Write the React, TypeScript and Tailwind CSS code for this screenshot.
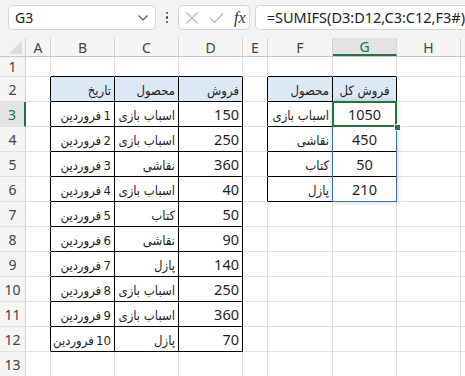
import React from "react";

const COLS = [26, 25, 64, 64, 64, 25, 65, 64, 64];
const LETTERS = ["A", "B", "C", "D", "E", "F", "G", "H"];

type Cell = { t: string; align: "r" | "c"; rtl?: boolean; hdr?: boolean };

const dates = [1, 2, 3, 4, 5, 6, 7, 8, 9, 10].map((n) => `${n}\u2009فروردین`);
const prods = ["اسباب بازی", "اسباب بازی", "نقاشی", "اسباب بازی", "کتاب", "نقاشی", "پازل", "اسباب بازی", "اسباب بازی", "پازل"];
const sales = [150, 250, 360, 40, 50, 90, 140, 250, 360, 70];
const fList = ["اسباب بازی", "نقاشی", "کتاب", "پازل"];
const gList = [1050, 450, 50, 210];

const AR_FONT = '"DejaVu Sans Condensed", "DejaVu Sans", sans-serif';

function inTable(r: number, c: number) {
  if (r >= 2 && r <= 12 && c >= 2 && c <= 4) return true;
  if (r >= 2 && r <= 6 && c >= 6 && c <= 7) return true;
  return false;
}

function getCell(r: number, c: number): Cell | null {
  if (r === 2) {
    if (c === 2) return { t: "تاریخ", align: "r", rtl: true, hdr: true };
    if (c === 3) return { t: "محصول", align: "r", rtl: true, hdr: true };
    if (c === 4) return { t: "فروش", align: "r", rtl: true, hdr: true };
    if (c === 6) return { t: "محصول", align: "r", rtl: true, hdr: true };
    if (c === 7) return { t: "فروش کل", align: "c", rtl: true, hdr: true };
  }
  if (r >= 3 && r <= 12) {
    const i = r - 3;
    if (c === 2) return { t: dates[i], align: "r", rtl: true };
    if (c === 3) return { t: prods[i], align: "r", rtl: true };
    if (c === 4) return { t: String(sales[i]), align: "r" };
  }
  if (r >= 3 && r <= 6) {
    const i = r - 3;
    if (c === 6) return { t: fList[i], align: "r", rtl: true };
    if (c === 7) return { t: String(gList[i]), align: "c" };
  }
  return null;
}

function ChevronDown() {
  return (
    <svg width="12" height="8" viewBox="0 0 12 8" fill="none">
      <path d="M1.5 1.5 L6 6 L10.5 1.5" stroke="#555" strokeWidth="1.2" />
    </svg>
  );
}

function DataCell({ r, c }: { r: number; c: number }) {
  const w = COLS[c];
  const cell = getCell(r, c);
  const rightBlack = inTable(r, c) || inTable(r, c + 1);
  const bottomBlack = inTable(r, c) || inTable(r + 1, c);
  const isG3 = r === 3 && c === 7;
  const h = r === 1 ? 20 : 25;
  return (
    <div
      className={
        "relative shrink-0 flex items-center border-r border-b " +
        (rightBlack ? "border-r-black " : "border-r-[#e1e1e1] ") +
        (bottomBlack ? "border-b-black " : "border-b-[#e1e1e1] ") +
        (cell?.hdr ? "bg-[#dde8f5] " : "bg-white ") +
        (cell?.align === "c" ? "justify-center" : "justify-end pr-[3px]")
      }
      style={{ width: w, height: h }}
    >
      {cell &&
        (cell.rtl ? (
          <span
            dir="rtl"
            className="whitespace-nowrap text-[13px] leading-none text-[#1f1f1f] pt-[2px]"
            style={{ fontFamily: AR_FONT }}
          >
            {cell.t}
          </span>
        ) : (
          <span className="whitespace-nowrap text-[14.5px] leading-none text-[#1f1f1f] pt-[1px]">{cell.t}</span>
        ))}
      {isG3 && (
        <>
          <div className="absolute left-[-1px] top-[-1px] w-[65px] h-[101px] border border-[#3a6cc8] shadow-[0_0_6px_rgba(0,0,0,0.18)] z-10 pointer-events-none" />
          <div className="absolute left-[-1px] top-[-1px] w-[65px] h-[26px] border-2 border-[#217346] z-20 pointer-events-none" />
          <div className="absolute right-[-5px] bottom-[-5px] w-[7px] h-[7px] bg-[#217346] border border-white z-30" />
        </>
      )}
    </div>
  );
}

function Row({ r }: { r: number }) {
  const h = r === 1 ? 20 : 25;
  const sel = r === 3;
  return (
    <div className="flex" style={{ height: h }}>
      <div
        className={
          "shrink-0 flex items-center justify-center text-[14px] border-b border-b-[#e1e1e1] " +
          (sel
            ? "bg-[#e3e3e3] text-[#217346] border-r-2 border-r-[#217346]"
            : "bg-[#f5f5f5] text-[#444] border-r border-r-[#d4d4d4]")
        }
        style={{ width: 26, height: h }}
      >
        {r}
      </div>
      {[1, 2, 3, 4, 5, 6, 7, 8].map((c) => (
        <DataCell key={c} r={r} c={c} />
      ))}
      <div className="flex-1 bg-white border-b border-b-[#e1e1e1]" />
    </div>
  );
}

export default function App() {
  return (
    <div
      className="w-[465px] h-[376px] overflow-hidden bg-white"
      style={{ fontFamily: '"Noto Sans", "DejaVu Sans", sans-serif' }}
    >
      <div className="h-[38px] bg-[#f3f3f3] flex items-start pt-[5px] pl-[8px]">
        <div className="w-[149px] h-[25px] bg-white border border-[#d6d6d6] rounded-[5px] flex items-center justify-between pl-[6px] pr-[6px]">
          <span className="text-[14px] text-[#222]">G3</span>
          <ChevronDown />
        </div>
        <div className="w-[22px] h-[25px] flex flex-col items-center justify-center gap-[2px]">
          <div className="w-[2.5px] h-[2.5px] rounded-full bg-[#444]" />
          <div className="w-[2.5px] h-[2.5px] rounded-full bg-[#444]" />
          <div className="w-[2.5px] h-[2.5px] rounded-full bg-[#444]" />
        </div>
        <div className="w-[72px] h-[25px] bg-white border border-[#d6d6d6] rounded-[5px] flex items-center pl-[6px] gap-[10px]">
          <svg width="14" height="14" viewBox="0 0 14 14">
            <path d="M1.5 1.5 L12.5 12.5 M12.5 1.5 L1.5 12.5" stroke="#b5b5b5" strokeWidth="1.1" fill="none" />
          </svg>
          <svg width="15" height="12" viewBox="0 0 15 12">
            <path d="M1 6 L5.5 10.5 L14 1.5" stroke="#b5b5b5" strokeWidth="1.1" fill="none" />
          </svg>
          <span
            className="text-[16px] italic text-[#333] leading-none"
            style={{ fontFamily: '"Liberation Serif", "DejaVu Serif", serif' }}
          >
            fx
          </span>
        </div>
        <div className="ml-[5px] flex-1 h-[25px] bg-white border border-[#d6d6d6] border-r-0 rounded-l-[5px] flex items-center pl-[11px]">
          <span className="text-[14.5px] text-[#222] whitespace-nowrap">=SUMIFS(D3:D12,C3:C12,F3#)</span>
        </div>
      </div>
      <div className="flex h-[19px] bg-[#f5f5f5] border-b border-b-[#c8c8c8]">
        <div className="shrink-0 w-[26px] h-full relative border-r border-r-[#d4d4d4] bg-[#f3f3f3]">
          <svg className="absolute right-[3px] bottom-[2px]" width="13" height="13" viewBox="0 0 13 13">
            <path d="M13 0 L13 13 L0 13 Z" fill="#dcdcdc" />
          </svg>
        </div>
        {LETTERS.map((l, i) => {
          const sel = l === "G";
          return (
            <div
              key={l}
              className={
                "shrink-0 h-full flex items-center justify-center text-[14px] " +
                (sel
                  ? "bg-[#e3e3e3] text-[#217346] border-b-2 border-b-[#217346] border-r border-r-[#d4d4d4]"
                  : "text-[#444] border-r border-r-[#d4d4d4]")
              }
              style={{ width: COLS[i + 1] }}
            >
              {l}
            </div>
          );
        })}
        <div className="flex-1" />
      </div>
      {Array.from({ length: 13 }, (_, i) => i + 1).map((r) => (
        <Row key={r} r={r} />
      ))}
    </div>
  );
}
